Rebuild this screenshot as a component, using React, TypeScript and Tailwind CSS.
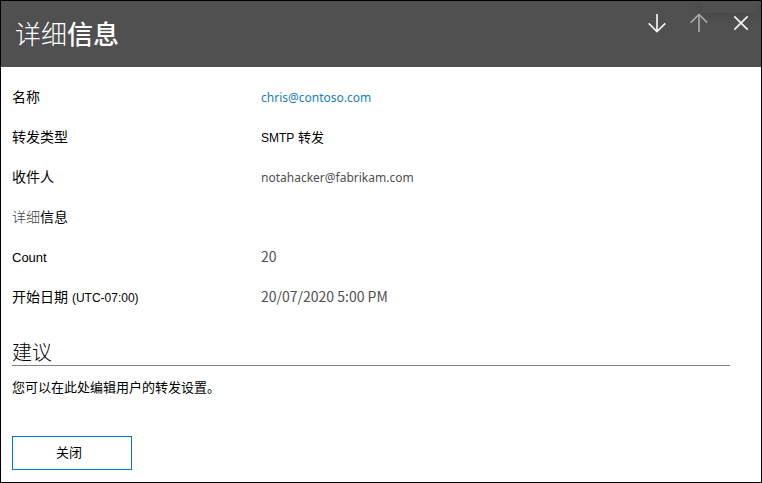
import type { ReactNode } from "react";

const mail = "font-['Noto_Sans',sans-serif] text-xs";
const figures = "font-['Noto_Sans_CJK_SC',sans-serif] text-sm";
const arial = "font-['Liberation_Sans','Noto_Sans_CJK_SC',sans-serif]";

type Row = { label: ReactNode; value?: ReactNode };

const rows: Row[] = [
  {
    label: "名称",
    value: (
      <a href="#chris" className={`${mail} text-[#1580bd]`}>
        chris@contoso.com
      </a>
    ),
  },
  {
    label: "转发类型",
    value: (
      <span className="text-[13px] text-black">
        <span className="text-xs">SMTP</span> 转发
      </span>
    ),
  },
  {
    label: "收件人",
    value: <span className={mail}>notahacker@fabrikam.com</span>,
  },
  {
    label: (
      <>
        <span className="font-light text-[#444444]">详细</span>信息
      </>
    ),
  },
  {
    label: <span className="text-[13px]">Count</span>,
    value: <span className={figures}>20</span>,
  },
  {
    label: (
      <>
        开始日期 <span className="text-xs">(UTC-07:00)</span>
      </>
    ),
    value: <span className={figures}>20/07/2020 5:00 PM</span>,
  },
];

function IconButton({ label, dim, d }: { label: string; dim?: boolean; d: string }) {
  return (
    <button type="button" aria-label={label} className={dim ? "text-[#a6a6a6]" : "text-[#f2f2f2]"}>
      <svg width="20" height="20" viewBox="0 0 20 20" fill="none" stroke="currentColor" strokeWidth="1.7">
        <path d={d} />
      </svg>
    </button>
  );
}

export default function App() {
  return (
    <main lang="zh-CN" className={`${arial} flex min-h-screen flex-col border border-black bg-white text-black`}>
      <header className="relative flex h-[66px] items-start justify-between bg-[#505050] pr-2.5 pl-3.5">
        <div className="absolute top-0 right-1 h-3 w-14 bg-[#505050] shadow-[0_2px_10px_rgba(0,0,0,0.16)]" />
        <h1 className="pt-3.5 text-[26px] leading-10 text-white">
          <span className="font-light">详细</span>
          <span className="font-medium">信息</span>
        </h1>
        <div className="relative flex gap-[22px] pt-3">
          <IconButton label="下一个" d="M10 1V18.5M1.7 10.3L10 18.6L18.3 10.3" />
          <IconButton label="上一个" dim d="M10 19V1.5M1.7 9.7L10 1.4L18.3 9.7" />
          <IconButton label="关闭面板" d="M3.3 3.3L16.7 16.7M16.7 3.3L3.3 16.7" />
        </div>
      </header>

      <section className="flex-1 pt-2.5 pr-[31px] pb-3 pl-[11px]">
        <dl>
          {rows.map((row, i) => (
            <div key={i} className="flex h-10 items-center">
              <dt className="w-[249px] shrink-0 text-sm">{row.label}</dt>
              <dd className="text-[#505050]">{row.value}</dd>
            </div>
          ))}
        </dl>
        <h2 className="mt-6 border-b border-[#808080] text-xl leading-6 font-light">
          建议
        </h2>
        <p className="mt-2.5 text-[13px] leading-6">您可以在此处编辑用户的转发设置。</p>
        <button type="button" className="mt-9 h-[34px] w-[120px] border border-[#0078d4] bg-white pr-1.5 text-[13px]">
          关闭
        </button>
      </section>
    </main>
  );
}
